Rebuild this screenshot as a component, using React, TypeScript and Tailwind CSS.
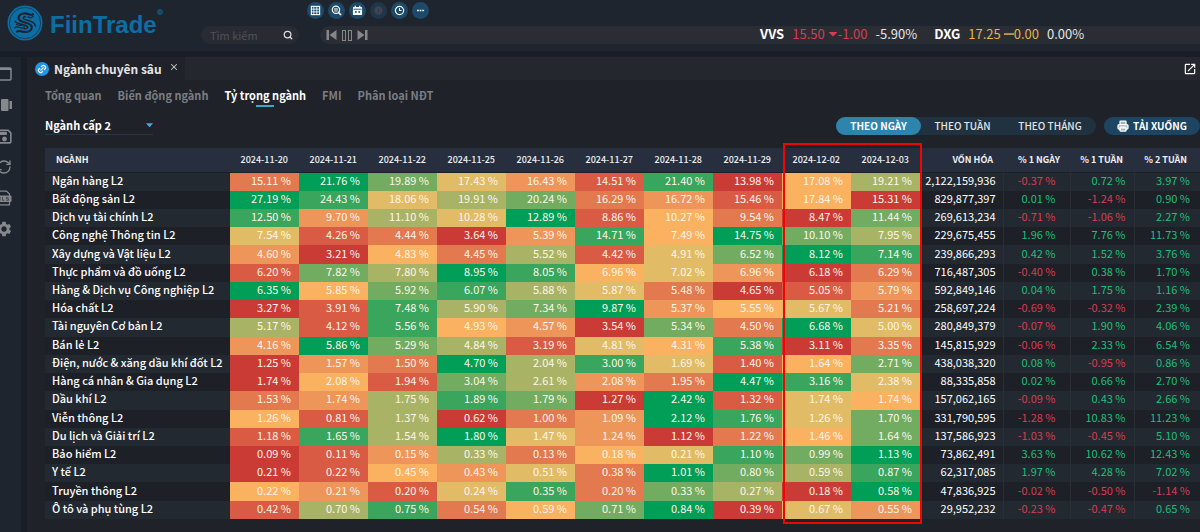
import React from "react";
import { Search, X, Link2, Printer, RefreshCw } from "lucide-react";
import { MdOutlineOpenInNew, MdSettings, MdOutlineSave } from "react-icons/md";

type Row = { name: string; days: number[]; cap: string; change: [number, number, number] };

const DATES = [
  "2024-11-20", "2024-11-21", "2024-11-22", "2024-11-25", "2024-11-26",
  "2024-11-27", "2024-11-28", "2024-11-29", "2024-12-02", "2024-12-03",
];

const ROWS: Row[] = [
  { name: "Ngân hàng L2", days: [15.11, 21.76, 19.89, 17.43, 16.43, 14.51, 21.4, 13.98, 17.08, 19.21], cap: "2,122,159,936", change: [-0.37, 0.72, 3.97] },
  { name: "Bất động sản L2", days: [27.19, 24.43, 18.06, 19.91, 20.24, 16.29, 16.72, 15.46, 17.84, 15.31], cap: "829,877,397", change: [0.01, -1.24, 0.9] },
  { name: "Dịch vụ tài chính L2", days: [12.5, 9.7, 11.1, 10.28, 12.89, 8.86, 10.27, 9.54, 8.47, 11.44], cap: "269,613,234", change: [-0.71, -1.06, 2.27] },
  { name: "Công nghệ Thông tin L2", days: [7.54, 4.26, 4.44, 3.64, 5.39, 14.71, 7.49, 14.75, 10.1, 7.95], cap: "229,675,455", change: [1.96, 7.76, 11.73] },
  { name: "Xây dựng và Vật liệu L2", days: [4.6, 3.21, 4.83, 4.45, 5.52, 4.42, 4.91, 6.52, 8.12, 7.14], cap: "239,866,293", change: [0.42, 1.52, 3.76] },
  { name: "Thực phẩm và đồ uống L2", days: [6.2, 7.82, 7.8, 8.95, 8.05, 6.961, 7.02, 6.959, 6.18, 6.29], cap: "716,487,305", change: [-0.4, 0.38, 1.7] },
  { name: "Hàng & Dịch vụ Công nghiệp L2", days: [6.35, 5.85, 5.92, 6.07, 5.88, 5.87, 5.48, 4.65, 5.05, 5.79], cap: "592,849,146", change: [0.04, 1.75, 1.16] },
  { name: "Hóa chất L2", days: [3.27, 3.91, 7.48, 5.9, 7.34, 9.87, 5.37, 5.55, 5.67, 5.21], cap: "258,697,224", change: [-0.69, -0.32, 2.39] },
  { name: "Tài nguyên Cơ bản L2", days: [5.17, 4.12, 5.56, 4.93, 4.57, 3.54, 5.34, 4.5, 6.68, 5.0], cap: "280,849,379", change: [-0.07, 1.9, 4.06] },
  { name: "Bán lẻ L2", days: [4.16, 5.86, 5.29, 4.84, 3.19, 4.81, 4.31, 5.38, 3.11, 3.35], cap: "145,815,929", change: [-0.06, 2.33, 6.54] },
  { name: "Điện, nước & xăng dầu khí đốt L2", days: [1.25, 1.57, 1.5, 4.7, 2.04, 3.0, 1.69, 1.4, 1.64, 2.71], cap: "438,038,320", change: [0.08, -0.95, 0.86] },
  { name: "Hàng cá nhân & Gia dụng L2", days: [1.74, 2.081, 1.94, 3.04, 2.61, 2.079, 1.95, 4.47, 3.16, 2.38], cap: "88,335,858", change: [0.02, 0.66, 2.7] },
  { name: "Dầu khí L2", days: [1.53, 1.739, 1.75, 1.89, 1.79, 1.27, 2.42, 1.32, 1.741, 1.74], cap: "157,062,165", change: [-0.09, 0.43, 2.66] },
  { name: "Viễn thông L2", days: [1.259, 0.81, 1.37, 0.62, 1.0, 1.09, 2.12, 1.76, 1.261, 1.7], cap: "331,790,595", change: [-1.28, 10.83, 11.23] },
  { name: "Du lịch và Giải trí L2", days: [1.18, 1.65, 1.54, 1.8, 1.47, 1.24, 1.12, 1.22, 1.46, 1.64], cap: "137,586,923", change: [-1.03, -0.45, 5.1] },
  { name: "Bảo hiểm L2", days: [0.09, 0.11, 0.15, 0.33, 0.13, 0.18, 0.21, 1.1, 0.99, 1.13], cap: "73,862,491", change: [3.63, 10.62, 12.43] },
  { name: "Y tế L2", days: [0.21, 0.22, 0.45, 0.43, 0.51, 0.38, 1.01, 0.8, 0.59, 0.87], cap: "62,317,085", change: [1.97, 4.28, 7.02] },
  { name: "Truyền thông L2", days: [0.22, 0.21, 0.199, 0.24, 0.35, 0.201, 0.33, 0.27, 0.18, 0.58], cap: "47,836,925", change: [-0.02, -0.5, -1.14] },
  { name: "Ô tô và phụ tùng L2", days: [0.42, 0.7, 0.75, 0.54, 0.59, 0.71, 0.84, 0.39, 0.67, 0.55], cap: "29,952,232", change: [-0.23, -0.47, 0.65] },
];

// Heat scale, lowest day of a row to its highest.
const HEAT = [
  "bg-[#cb3b36]", "bg-[#da5b43]", "bg-[#e3794e]", "bg-[#ee9559]", "bg-[#fab160]",
  "bg-[#e1bb66]", "bg-[#a9b365]", "bg-[#72ac60]", "bg-[#3aa55c]", "bg-[#009e57]",
];

const heatOf = (days: number[], v: number) => HEAT[days.filter((d) => d < v).length];

function Logo() {
  return (
    <a href="#" className="flex items-center gap-[7px] text-[#0d6ea6]" aria-label="FiinTrade">
      <svg viewBox="0 0 36 36" className="size-9" fill="none">
        <circle cx="18" cy="18" r="17.5" fill="#0d6ea6" />
        <circle cx="18" cy="18" r="15.6" stroke="#1d2b3a" strokeWidth="0.7" />
        <g stroke="#1b2532" strokeLinecap="round" strokeLinejoin="round">
          <path d="M26 9.200c-1.800 1.800-4.600-.9-8.200-.9-3.600 0-6.300 1.900-6.300 4.700 0 5.600 13.300 3.400 13.300 9.300 0 3.200-3.300 4.700-6.600 4.700-3.400 0-5.600-2-8.200-.5" strokeWidth="2.200" />
          <path d="M18.500 11.600c-2.300.3-3 1.500-1.500 2.500 3 1.700 11.300 1.700 11.300 6.900M8.200 16.200c1.200 3.600 11.600 2.800 12.400 5.600.4 1.500-1.500 2.200-3.300 2" strokeWidth="1.500" />
          <path d="M7.800 22.800c2-2.200 4.500-.2 6.700.3s2.800-.9 2.800-1.900M21 11.800c1.700 1.400 3.700 1 5.200-.4M9.500 19.600c1.500 1 3.500 1 5.500 1" strokeWidth="1.200" />
        </g>
      </svg>
      <span className="flex items-start pt-[3px] font-['Liberation_Sans',sans-serif] text-2xl font-bold">
        FiinTrade
        <svg viewBox="0 0 6 6" className="size-[6px]" fill="none" stroke="currentColor">
          <circle cx="3" cy="3" r="2.300" />
          <path d="M2.300 4.200V1.900h.8a.6.6 0 0 1 0 1.200h-.8M3.100 3.100l.7 1.100" strokeWidth="0.600" />
        </svg>
      </span>
    </a>
  );
}

function RoundTool({ label, dim, children }: { label: string; dim?: boolean; children: React.ReactNode }) {
  return (
    <button
      aria-label={label}
      className={`flex size-[17px] items-center justify-center rounded-full ${dim ? "bg-[#20364a] text-[#3c4550]" : "bg-[#1d4a68] text-white"}`}
    >
      <svg viewBox="0 0 12 12" className="size-[11px]" fill="none" stroke="currentColor">
        {children}
      </svg>
    </button>
  );
}

function Header() {
  return (
    <header className="flex h-[51px] bg-[#1e252f]">
      <div className="w-[201px] shrink-0 pt-[5px] pl-[7px]">
        <Logo />
      </div>
      <div className="flex min-w-0 flex-1 flex-col gap-[7px] pt-[2px]">
        <div className="flex gap-1 pl-[106px]">
          <RoundTool label="Bảng giá">
            <rect x="1.500" y="1.500" width="9" height="9" strokeWidth="1.200" />
            <path d="M1.500 4.500h9M1.500 7.500h9M4.200 1.500v9M7.400 1.500v9" strokeWidth="0.900" />
          </RoundTool>
          <RoundTool label="Tra cứu">
            <circle cx="5.400" cy="5.200" r="4" strokeWidth="1.300" />
            <path d="M8.300 8.300l2.700 2.700" strokeWidth="1.600" />
            <path d="M3.400 4h4M3.400 5.300h4M3.400 6.600h4" strokeWidth="0.800" />
          </RoundTool>
          <RoundTool label="Lịch sự kiện">
            <rect x="1" y="2.200" width="10" height="8.800" rx="1" fill="currentColor" stroke="none" />
            <path d="M3.500 .8v2M8.500 .8v2" strokeWidth="1.300" />
            <path d="M1.500 4.600h9M3 7.600h2.200M6.800 7.600H9M4.100 6.500v2.200M7.900 6.500v2.200" stroke="#1d4a68" strokeWidth="1" />
          </RoundTool>
          <RoundTool label="Thông tin" dim>
            <circle cx="6" cy="6" r="4.600" fill="currentColor" stroke="none" />
            <path d="M6 4v4" stroke="#2a3440" />
          </RoundTool>
          <RoundTool label="Thời gian">
            <circle cx="6" cy="6" r="4.500" strokeWidth="1.300" />
            <path d="M6 3.400V6h2.200" strokeWidth="1.100" />
          </RoundTool>
          <RoundTool label="Thêm">
            <path d="M2.200 6h1.900M5.100 6h1.900M8 6h1.900" strokeWidth="1.600" />
          </RoundTool>
        </div>
        <div className="flex gap-[21px]">
          <label className="flex h-[18px] w-[98px] shrink-0 items-center rounded-full bg-[#292b32] pr-[6px] pl-[9px]">
            <input
              aria-label="Tìm kiếm"
              placeholder="Tìm kiếm"
              className="min-w-0 flex-1 bg-transparent text-[11px] leading-4 outline-none placeholder:text-[#4e5157]"
            />
            <Search className="size-[10px] text-[#dcdcdc]" strokeWidth={3} />
          </label>
          <div className="flex h-[18px] flex-1 items-center gap-[5px] rounded-l-full bg-[#2b2d34] pl-[6px] text-[#85878b]">
            <button aria-label="Trước">
              <svg viewBox="0 0 11 12" className="h-3 w-[11px]" fill="currentColor">
                <path d="M0.500 1H3v10H0.500zM10.500 1v10L3.500 6z" />
              </svg>
            </button>
            <button aria-label="Tạm dừng">
              <svg viewBox="0 0 10 11" className="h-[11px] w-[10px]" fill="none" stroke="currentColor">
                <rect x="0.500" y="0.500" width="3" height="10" />
                <rect x="6.500" y="0.500" width="3" height="10" />
              </svg>
            </button>
            <button aria-label="Sau">
              <svg viewBox="0 0 11 12" className="h-3 w-[11px]" fill="currentColor">
                <path d="M8 1h2.500v10H8zM0.500 1v10l7-5z" />
              </svg>
            </button>
            <div className="ml-[387px] flex items-center gap-[17px] pb-[2px] text-[13px] leading-4 whitespace-nowrap">
              <Quote code="VVS" price="15.50" diff="-1.00" pct="-5.90%" down />
              <Quote code="DXG" price="17.25" diff="0.00" pct="0.00%" />
            </div>
          </div>
        </div>
      </div>
    </header>
  );
}

function Quote({ code, price, diff, pct, down }: { code: string; price: string; diff: string; pct: string; down?: boolean }) {
  return (
    <div className="flex items-center gap-2 text-[#e4e5e7]">
      <b className="text-white">{code}</b>
      <span className={`flex items-center ${down ? "text-[#d33f52]" : "text-[#e6b344]"}`}>
        {price}
        <svg viewBox="0 0 10 6" className="ml-[3px] h-[6px] w-[10px]" fill="currentColor">
          <path d={down ? "M0.500 1h9L5 5.500z" : "M0 2.300h10v1.500H0z"} />
        </svg>
        {diff}
      </span>
      <span>{pct}</span>
    </div>
  );
}

function SideButton({ label, children }: { label: string; children: React.ReactNode }) {
  return (
    <button aria-label={label} className="-ml-1 flex size-4 items-center justify-center">
      {children}
    </button>
  );
}

function Sidebar() {
  return (
    <nav className="flex w-[21px] shrink-0 flex-col items-start gap-[15px] overflow-hidden bg-[#1e252f] pt-[9px] text-[#85888c]">
      <SideButton label="Cửa sổ">
        <svg viewBox="0 0 16 16" className="size-4" fill="none" stroke="currentColor">
          <rect x="1" y="2" width="14" height="12" rx="1" strokeWidth="1.500" />
          <path d="M1 3h14" strokeWidth="2" />
        </svg>
      </SideButton>
      <SideButton label="Bố cục">
        <svg viewBox="0 0 16 16" className="size-4" fill="currentColor">
          <rect x="5" y="2" width="7.500" height="12" rx="1" />
          <rect x="1" y="4" width="3" height="8" />
          <rect x="13.500" y="4" width="2.500" height="8" />
        </svg>
      </SideButton>
      <SideButton label="Lưu">
        <MdOutlineSave className="size-[19px] shrink-0" />
      </SideButton>
      <SideButton label="Làm mới">
        <RefreshCw className="size-4" strokeWidth={2} />
      </SideButton>
      <SideButton label="Xuất Excel">
        <svg viewBox="0 0 16 16" className="size-4" fill="none" stroke="currentColor">
          <path d="M3 6V1.200h7.500L13.500 4v2M3 12v2.800h10.500V12" strokeWidth="1.200" />
          <rect x="0.500" y="5.500" width="15" height="6.500" rx="1" fill="currentColor" stroke="none" />
          <path d="M2.500 7.200l2.200 3.200M4.700 7.200l-2.200 3.200M6.500 7v3.300h2M12.500 7.300h-2v1.500h2v1.500h-2.200" stroke="#1e252f" strokeWidth="0.600" />
        </svg>
      </SideButton>
      <SideButton label="Cài đặt">
        <MdSettings className="size-[18px] shrink-0" />
      </SideButton>
    </nav>
  );
}

const VIEWS = ["Tổng quan", "Biến động ngành", "Tỷ trọng ngành", "FMI", "Phân loại NĐT"];

function HeatTable() {
  const th = "p-0 text-right text-[9px]";
  return (
    <div className="relative mt-[13px] ml-[18px]">
      <table className="h-[371px] w-full table-fixed border-collapse text-[11px] leading-[14px] whitespace-nowrap text-[#f0f1f2]">
        <colgroup>
          <col className="w-[185px]" />
          {DATES.map((d) => (
            <col key={d} className="w-[69px]" />
          ))}
          <col className="w-[83px]" />
          <col className="w-[67px]" />
          <col className="w-[64px]" />
          <col className="w-[66px]" />
        </colgroup>
        <thead>
          <tr className="h-6 border-b border-[#1c1f26] bg-[#272f3f]">
            <th className="p-0 pl-[11px] text-left text-[9px] font-bold">NGÀNH</th>
            {DATES.map((d) => (
              <th key={d} className={`${th} pr-[11px] font-medium`}>{d}</th>
            ))}
            <th className={`${th} pr-[10px] font-bold`}>VỐN HÓA</th>
            <th className={`${th} pr-[10px] font-bold`}>% 1 NGÀY</th>
            <th className={`${th} pr-[11px] font-bold`}>% 1 TUẦN</th>
            <th className={`${th} pr-[13px] font-bold`}>% 2 TUẦN</th>
          </tr>
        </thead>
        <tbody>
          {ROWS.map((r) => (
            <tr key={r.name} className="odd:bg-[#232930] even:bg-[#1e2027]">
              <th scope="row" className="p-0 pb-1 pl-[7px] text-left font-medium text-white">{r.name}</th>
              {r.days.map((v, i) => (
                <td key={i} className={`p-0 pr-2 pb-1 text-right text-[#fdf6ea] ${heatOf(r.days, v)}`}>
                  {v.toFixed(2)} %
                </td>
              ))}
              <td className="p-0 pr-[7px] pb-1 text-right text-white">{r.cap}</td>
              {r.change.map((c, i) => (
                <td
                  key={i}
                  className={`border-l border-[#2a2e36] p-0 pb-1 text-right ${i === 0 ? "pr-[14px]" : i === 1 ? "pr-2" : "pr-[10px]"} ${c < 0 ? "text-[#d33f52]" : "text-[#1fbf7a]"}`}
                >
                  {c.toFixed(2)} %
                </td>
              ))}
            </tr>
          ))}
        </tbody>
      </table>
      <div className="pointer-events-none absolute -top-[5px] -bottom-[5px] left-[738px] w-[139px] border-2 border-[#f00505]" />
    </div>
  );
}

export default function App() {
  return (
    <div className="flex min-h-screen flex-col overflow-hidden bg-[#191d26] font-['Noto_Sans_CJK_SC','Noto_Sans',sans-serif] text-white">
      <Header />
      <div className="mt-[6px] flex flex-1 gap-[6px]">
        <Sidebar />
        <main className="min-w-0 flex-1 bg-[#1f2229]">
          <div className="flex h-[23px] items-center bg-[#25272f]">
            <div className="flex h-full w-[158px] items-center bg-[#1f2229] pl-2">
              <span className="mr-[5px] flex size-[14px] shrink-0 items-center justify-center rounded-full bg-[#2196e8]">
                <Link2 className="size-[10px] -rotate-45" strokeWidth={3} />
              </span>
              <h1 className="text-[12px] leading-5 font-bold whitespace-nowrap text-[#e4e5e7]">Ngành chuyên sâu</h1>
              <button aria-label="Đóng" className="mb-1 ml-[7px]">
                <X className="size-[10px] text-[#c8c9cb]" strokeWidth={2.5} />
              </button>
            </div>
            <button aria-label="Mở cửa sổ mới" className="mr-[3px] ml-auto">
              <MdOutlineOpenInNew className="size-[14px]" />
            </button>
          </div>
          <nav className="flex gap-4 pt-[6px] pl-[18px] text-[11px] leading-[18px] font-bold whitespace-nowrap text-[#7c7e83]">
            {VIEWS.map((v) =>
              v === "Tỷ trọng ngành" ? (
                <a key={v} href="#" className="flex flex-col items-center gap-px text-white">
                  {v}
                  <span className="h-[2px] w-[18px] bg-[#3fa3cc]" />
                </a>
              ) : (
                <a key={v} href="#">{v}</a>
              ),
            )}
          </nav>
          <div className="mt-[9px] flex items-center pl-[18px]">
            <div className="relative w-[108px] border-b border-[#22374a]">
              <select
                aria-label="Cấp ngành"
                className="block w-full appearance-none bg-transparent text-[11px] leading-[18px] font-bold outline-none"
              >
                <option>Ngành cấp 2</option>
              </select>
              <svg viewBox="0 0 6 4" className="pointer-events-none absolute top-[7px] right-0 h-[5px] w-[7px]" fill="#3fb0dc">
                <path d="M0 0h6L3 3.500z" />
              </svg>
            </div>
            <div className="ml-auto flex h-[18px] rounded-full bg-[#20313f] text-[10px] leading-[18px] font-medium text-[#e4e5e7]">
              <button className="w-[85px] rounded-full bg-[#2e84ab] font-bold text-white">THEO NGÀY</button>
              <button className="w-[83px]">THEO TUẦN</button>
              <button className="w-[92px]">THEO THÁNG</button>
            </div>
            <button className="ml-2 flex h-[18px] w-[96px] items-center justify-center gap-1 rounded-l-full rounded-r-full bg-[#1d4460] text-[10px] leading-[18px] font-bold">
              <Printer className="size-3 fill-white/60" strokeWidth={2.5} />
              TẢI XUỐNG
            </button>
          </div>
          <HeatTable />
        </main>
      </div>
    </div>
  );
}
